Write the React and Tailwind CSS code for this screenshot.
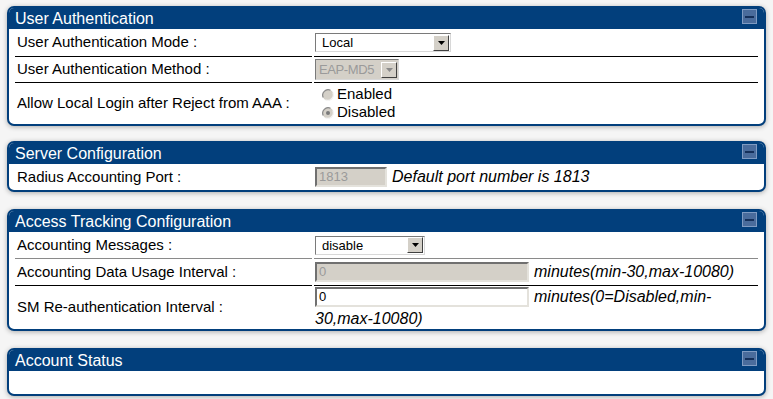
import React from "react";

const HEAD = "bg-[#023f7c]";

const MinButton = () => (
  <div className="mt-[1px] flex h-[15px] w-[15px] items-center justify-center border border-[#7f9bc2] bg-[#4a6c9c]">
    <div className="h-[2px] w-[9px] bg-[#15305a]" />
  </div>
);

const Panel = ({ title, children }) => (
  <div className="overflow-hidden rounded-[7px] border-2 border-[#023f7c] bg-white shadow-[0_1px_5px_rgba(0,0,0,0.3)]">
    <div className={`flex h-[21px] items-start justify-between pl-[6px] pr-[7px] ${HEAD}`}>
      <span className="text-[16px] leading-[21px] text-white">{title}</span>
      <MinButton />
    </div>
    {children}
  </div>
);

const Row = ({ label, children, h, line = "border-black", last }) => (
  <>
    <div
      className={`flex items-center pl-[2px] text-[15px] text-black ${last ? "" : "border-b " + line}`}
      style={{ height: h }}
    >
      {label}
    </div>
    <div
      className={`flex items-center pl-[1px] text-[15px] text-black ${last ? "" : "border-b " + line}`}
      style={{ height: h }}
    >
      {children}
    </div>
  </>
);

const Arrow = ({ disabled }) => (
  <div className="flex h-[16px] w-[16px] shrink-0 items-center justify-center border border-t-white border-l-white border-b-[#404040] border-r-[#404040] bg-[#d4d0c8]">
    <svg width="7" height="4" viewBox="0 0 7 4">
      <path d="M0 0h7L3.5 4z" fill={disabled ? "#8a8a8a" : "#000"} />
    </svg>
  </div>
);

const Select = ({ value, w, disabled }) => (
  <div
    className={`flex items-center justify-between border border-t-[#7a7a7a] border-l-[#7a7a7a] border-b-[#d8d8d8] border-r-[#d8d8d8] pr-[1px] text-[13px] ${
      disabled ? "bg-[#d4d0c8] pl-[3px] text-[#9a9a9a]" : "bg-white pl-[6px] text-black"
    }`}
    style={{ width: w, height: disabled ? 21 : 19 }}
  >
    <span className={`leading-none ${disabled ? "tracking-[-0.4px]" : ""}`}>{value}</span>
    <Arrow disabled={disabled} />
  </div>
);

const Input = ({ value, w, disabled }) => (
  <div
    className={`flex h-[20px] shrink-0 items-center border-2 border-t-[#707070] border-l-[#707070] border-b-[#e4e2dc] border-r-[#e4e2dc] pl-[2px] text-[13px] not-italic ${
      disabled ? "bg-[#d4d0c8] text-[#9a9a9a]" : "bg-white text-black"
    }`}
    style={{ width: w }}
  >
    {value}
  </div>
);

const Radio = ({ checked, label }) => (
  <div className="flex h-[18px] items-center">
    <svg width="12" height="12" viewBox="0 0 12 12" className="ml-[7px] mr-[3px]">
      <circle cx="6" cy="6" r="5.5" fill="#d4d0c8" />
      <path d="M1.2 8.5A5.5 5.5 0 0 1 8.5 1.2" stroke="#8a8a8a" strokeWidth="1.2" fill="none" />
      <path d="M3.5 10.8A5.5 5.5 0 0 0 10.8 3.5" stroke="#f4f4f4" strokeWidth="1.2" fill="none" />
      {checked && <circle cx="6" cy="6" r="2" fill="#7a7a7a" />}
    </svg>
    <span className="text-[15px]">{label}</span>
  </div>
);

const Body = ({ children }) => (
  <div className="grid grid-cols-[297px_1fr] gap-x-[2px] px-[6px]">{children}</div>
);

export default function App() {
  return (
    <div
      className="min-h-[399px] bg-[#f5f5f5] px-[7px] pt-[6px]"
      style={{ fontFamily: '"Liberation Sans", Arial, sans-serif' }}
    >
      <Panel title="User Authentication">
        <Body>
          <Row label="User Authentication Mode :" h={28}>
            <Select value="Local" w={136} />
          </Row>
          <Row label="User Authentication Method :" h={26}>
            <Select value="EAP-MD5" w={84} disabled />
          </Row>
          <Row label="Allow Local Login after Reject from AAA :" h={41} last>
            <div className="flex flex-col">
              <Radio label="Enabled" />
              <Radio label="Disabled" checked />
            </div>
          </Row>
        </Body>
      </Panel>

      <div className="mt-[15px]">
        <Panel title="Server Configuration">
          <Body>
            <Row label="Radius Accounting Port :" h={26} last>
              <Input value="1813" w={72} disabled />
              <span className="ml-[5px] text-[16px] italic">Default port number is 1813</span>
            </Row>
          </Body>
        </Panel>
      </div>

      <div className="mt-[17px]">
        <Panel title="Access Tracking Configuration">
          <Body>
            <Row label="Accounting Messages :" h={27} line="border-[#8a8a8a]">
              <Select value="disable" w={110} />
            </Row>
            <Row label="Accounting Data Usage Interval :" h={27}>
              <Input value="0" w={214} disabled />
              <span className="ml-[5px] text-[16px] italic">minutes(min-30,max-10080)</span>
            </Row>
            <Row label="SM Re-authentication Interval :" h={43} last>
              <div className="text-[16px] leading-[18px]">
                <div className="flex items-center">
                  <Input value="0" w={214} />
                  <span className="ml-[5px] italic">minutes(0=Disabled,min-</span>
                </div>
                <div className="mt-[3px] italic">30,max-10080)</div>
              </div>
            </Row>
          </Body>
        </Panel>
      </div>

      <div className="mt-[17px]">
        <Panel title="Account Status">
          <div className="h-[23px]" />
        </Panel>
      </div>
    </div>
  );
}
